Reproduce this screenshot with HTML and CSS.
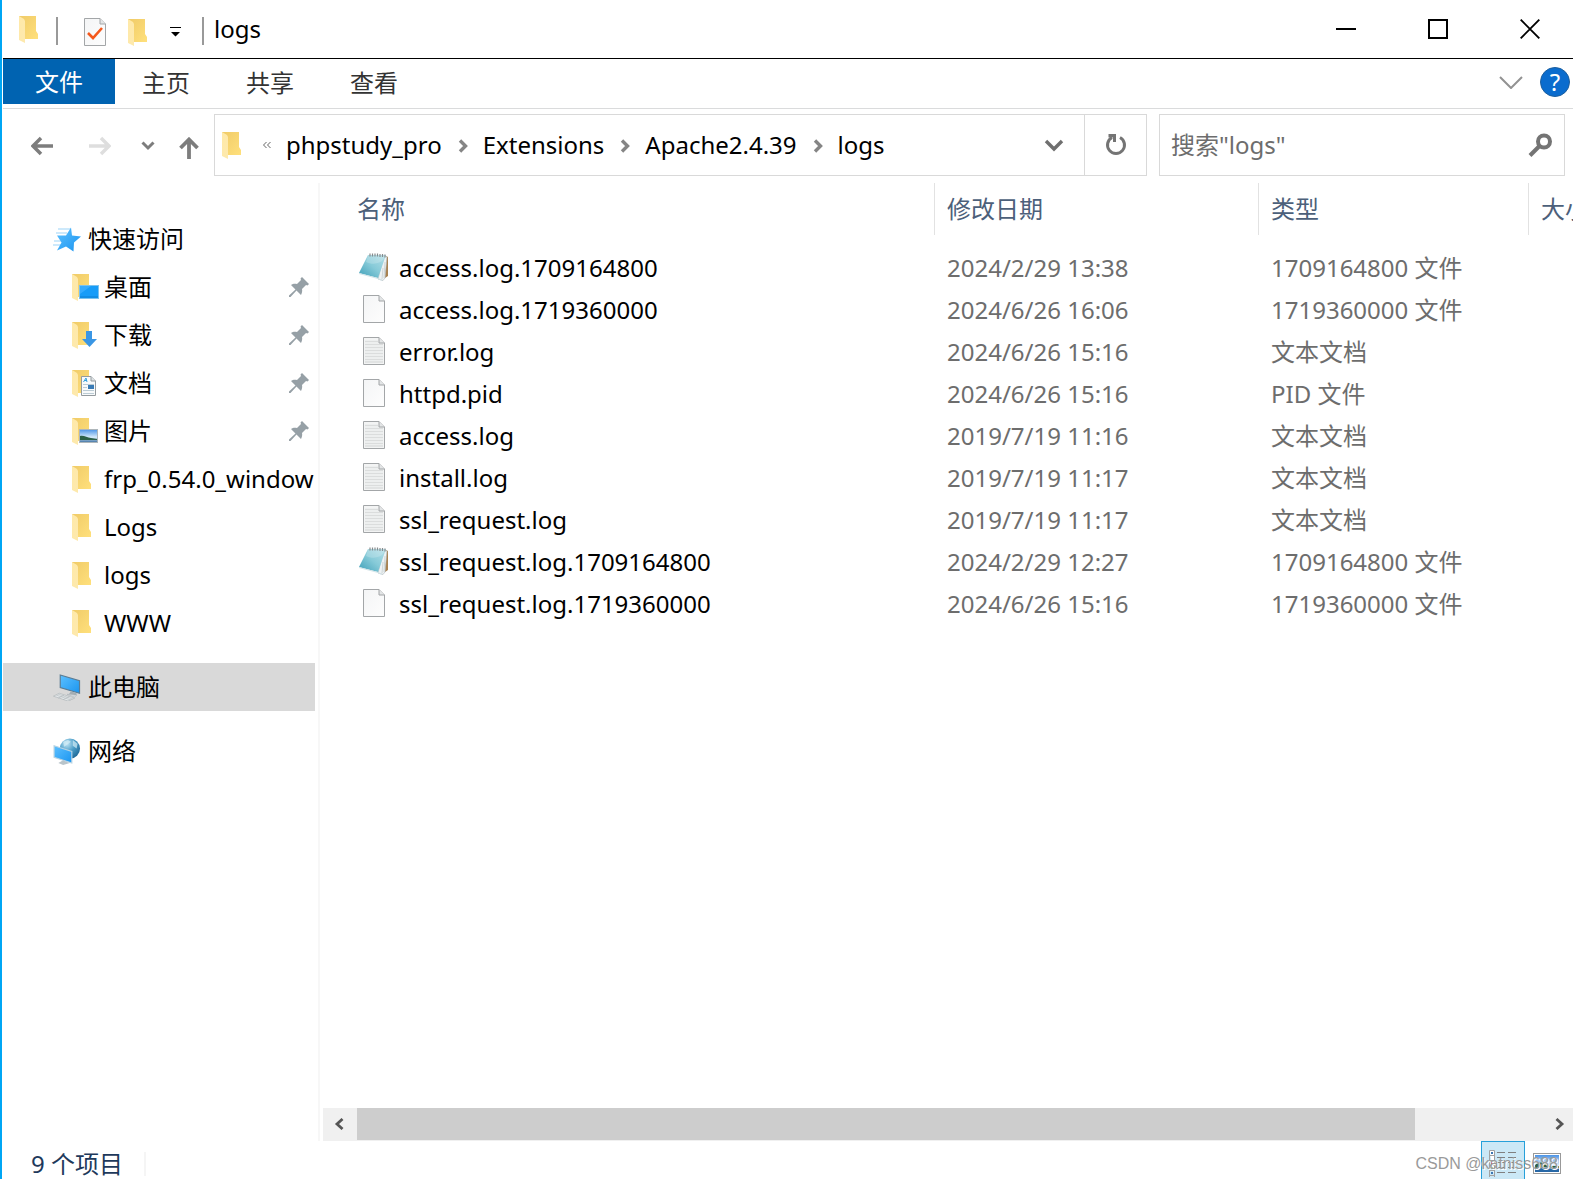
FILE: index.html
```html
<!DOCTYPE html>
<html lang="zh-CN">
<head>
<meta charset="utf-8">
<meta name="viewport" content="width=device-width, initial-scale=1">
<title>logs</title>
<link rel="stylesheet" href="styles.css">
</head>
<body>
<svg class="defs" aria-hidden="true">
  <defs>
    <linearGradient id="gFlap" x1="0" y1="0" x2="1" y2="1"><stop offset="0" stop-color="#ffe9a8"/><stop offset="1" stop-color="#fde9ae"/></linearGradient>
    <linearGradient id="gBack" x1="0" y1="0" x2="1" y2="1"><stop offset="0" stop-color="#f0cb68"/><stop offset="1" stop-color="#ffe07c"/></linearGradient>
    <linearGradient id="gBlue" x1="0" y1="0" x2="1" y2="1"><stop offset="0" stop-color="#5cc0ff"/><stop offset="1" stop-color="#1b95f0"/></linearGradient>
    <linearGradient id="gNote" x1="1" y1="0" x2="0" y2="1"><stop offset="0" stop-color="#b5e0e8"/><stop offset="0.5" stop-color="#86cad8"/><stop offset="1" stop-color="#3e9fb8"/></linearGradient>
    <linearGradient id="gPaper" x1="0" y1="0" x2="1" y2="1"><stop offset="0" stop-color="#f4f5f6"/><stop offset="1" stop-color="#fdfdfd"/></linearGradient>
    <linearGradient id="gSky" x1="0" y1="0" x2="0" y2="1"><stop offset="0" stop-color="#4b93e6"/><stop offset="0.6" stop-color="#d8ecfb"/><stop offset="1" stop-color="#3a6ea0"/></linearGradient>
    <radialGradient id="gGlobe" cx="0.35" cy="0.25" r="0.8"><stop offset="0" stop-color="#c3e6f5"/><stop offset="0.5" stop-color="#4c9ec8"/><stop offset="1" stop-color="#1e6796"/></radialGradient>
  </defs>
  <symbol id="folder" viewBox="0 0 19 27">
    <path d="M0 0H17V15L19 18V23H6L1 20Z" fill="url(#gBack)"/>
    <path d="M0 0L5 3L6 5V27L0 24Z" fill="url(#gFlap)"/>
  </symbol>
  <symbol id="page" viewBox="0 0 22 28">
    <path d="M.5 .5H16L21.500 6V27.500H.5Z" fill="url(#gPaper)" stroke="#a3a6a8"/>
    <path d="M16 .5V6H21.500" fill="#e3e5e6" stroke="#a3a6a8"/>
  </symbol>
  <symbol id="textpage" viewBox="0 0 22 28">
    <path d="M.5 .5H16L21.500 6V27.500H.5Z" fill="#f3f4f4" stroke="#a3a6a8"/>
    <path d="M2 4.500H15M2 7.500H20M2 10.500H20M2 13.500H20M2 16.500H20M2 19.500H20M2 22.500H20M2 25H20" stroke="#dbdddd" stroke-width="1.400"/>
    <path d="M16 .5V6H21.500" fill="#e3e5e6" stroke="#a3a6a8"/>
  </symbol>
  <symbol id="notepad" viewBox="0 0 30 28">
    <path d="M25 2L29 4L29 23L26 25Z" fill="#a98250"/>
    <path d="M25 2L28 4L26 25L24 27.500L19 26Z" fill="#eef2f3" stroke="#aab4b8" stroke-width=".6"/>
    <path d="M24 15L23 26M26 9L25 25" stroke="#c5ced1" stroke-width=".8"/>
    <path d="M9 2H27L19 25L0 20Z" fill="url(#gNote)"/>
    <path d="M0 20.500L19 25.500L23 27.500" stroke="#d3e4e8" fill="none"/>
    <path d="M7 9C13 12 18 11 23 8L27 2H9Z" fill="#fff" opacity=".2"/>
    <path d="M11 .5V3.500M13.500 .5V3.500M16 .5V3.500M18.500 .5V3.500M21 1V4M23.500 1V4M26 1.500V4.500" stroke="#858b8e" stroke-width="1.200"/>
  </symbol>
  <symbol id="pin" viewBox="0 0 20 20">
    <path d="M13 0L20 7L18.500 8.500L17 8L13 12C13.500 14 13 16 12 18L7.500 13.500L1.500 20H0V18.500L6.500 12.500L2 8C4 6.500 6 6.500 8 7L12 3L11.500 1.500Z" fill="#96a0a6"/>
  </symbol>
  <symbol id="crumb" viewBox="0 0 10 16">
    <path d="M2 2.500L7.500 8L2 13.500" fill="none" stroke="#858585" stroke-width="3.400"/>
  </symbol>
  <symbol id="desktop" viewBox="0 0 28 27">
    <use href="#folder" width="19" height="27"/>
    <rect x="7.500" y="11.500" width="19" height="13" fill="#179cf8" stroke="#7cc2ee"/>
    <path d="M8 23H26" stroke="#0f7fd0"/><path d="M8 20L19 12H8Z" fill="#35abff"/>
  </symbol>
  <symbol id="download" viewBox="0 0 28 27">
    <use href="#folder" width="19" height="27"/>
    <path d="M14 9H20V17H25L17.500 25L10 17H14Z" fill="#3a96e4"/>
  </symbol>
  <symbol id="document" viewBox="0 0 28 27">
    <use href="#folder" width="19" height="27"/>
    <path d="M9.500 6.500H19L23.500 11V25.500H9.500Z" fill="#f8fafb" stroke="#949b9f"/>
    <path d="M19 6.500V11H23.500" fill="#dfe3e5" stroke="#949b9f"/>
    <path d="M11.500 12L14 8L15 12M12.500 10.500H15" stroke="#35a0dd" fill="none"/>
    <path d="M11 14.500H22M11 17.500H15M11 20.500H22M11 23.500H22" stroke="#bcccd5"/>
    <rect x="16" y="15" width="6" height="4" fill="#397bb5"/>
  </symbol>
  <symbol id="picture" viewBox="0 0 28 27">
    <use href="#folder" width="19" height="27"/>
    <rect x="7.500" y="11.500" width="18" height="13" fill="url(#gSky)" stroke="#aeb6ba"/>
    <path d="M8 18C12 17 15 20 19 20L25 21V22H8Z" fill="#2d6148"/>
  </symbol>
  <symbol id="star" viewBox="0 0 28 24">
    <path d="M5 1.500H18M3 5.500H14M1 13.500H8M0 17.500H8" stroke="#9bd3f8" stroke-width="1.200"/>
    <path d="M18 0L19 8L28 9L21 15L20.500 24L13 19L4 23L8.500 15L4 8H13Z" fill="url(#gBlue)"/>
  </symbol>
  <symbol id="computer" viewBox="0 0 28 28">
    <path d="M7 1L27 7V20L7 14Z" fill="url(#gBlue)" stroke="#5a7c94" stroke-width="1.200"/>
    <path d="M18 18L24 20V22L16 21Z" fill="#a3adb3"/>
    <path d="M14 21L24 22L22 24Z" fill="#dce1e4" stroke="#a6aeb3" stroke-width=".5"/>
    <path d="M0 23L6 20L22 25L15 28Z" fill="#e6eaec" stroke="#adb4b8" stroke-width=".7"/>
    <path d="M3 22L18 27M5 21L20 26M5 25L11 22M10 26.500L16 23.500" stroke="#adb4b8" stroke-width=".6"/>
  </symbol>
  <symbol id="network" viewBox="0 0 28 28">
    <circle cx="17" cy="11" r="10.500" fill="url(#gGlobe)"/>
    <path d="M10 4L15 2L18 4L14 7L11 9ZM20 2L25 6L24 11L20 8Z" fill="#d4eef7" opacity=".7"/>
    <path d="M.6 8L19 14V26L.6 20Z" fill="url(#gBlue)" stroke="#b7d3e3" stroke-width="1.200"/>
    <path d="M10 23L14 25L17 26L10 28L5 26Z" fill="#b9c4ca"/>
  </symbol>
</svg>

<div class="window">
  <header class="titlebar">
    <svg class="folder" aria-hidden="true"><use href="#folder"/></svg>
    <span class="rule rule-first"></span>
    <button class="plain quick" aria-label="属性"><svg width="22" height="28" viewBox="0 0 22 28"><use href="#page" width="22" height="28"/><path d="M4 15L9 20L18 10" fill="none" stroke="#f4581c" stroke-width="2.600"/></svg></button>
    <button class="plain quick" aria-label="新建文件夹"><svg class="folder"><use href="#folder"/></svg></button>
    <button class="plain quick" aria-label="自定义快速访问工具栏"><svg width="12" height="10" viewBox="0 0 12 10"><path d="M1 0H12V1H1ZM2 5H11L6.500 9.500Z"/></svg></button>
    <span class="rule rule-last"></span>
    <h1 class="title">logs</h1>
    <div class="controls">
      <button class="plain control" aria-label="最小化"><svg width="20" height="20"><path d="M0 10H20" stroke="#000" stroke-width="2"/></svg></button>
      <button class="plain control" aria-label="最大化"><svg width="20" height="20"><rect x="1" y="1" width="18" height="18" fill="none" stroke="#000" stroke-width="2"/></svg></button>
      <button class="plain control" aria-label="关闭"><svg width="20" height="20"><path d="M.7 .7L19.300 19.300M19.300 .7L.7 19.300" stroke="#000" stroke-width="1.900"/></svg></button>
    </div>
  </header>

  <nav class="ribbon">
    <button class="plain tab tab-file">文件</button>
    <button class="plain tab">主页</button>
    <button class="plain tab">共享</button>
    <button class="plain tab">查看</button>
    <div class="ribbon-end">
      <button class="plain" aria-label="展开功能区"><svg width="24" height="14" viewBox="0 0 24 14"><path d="M1 2L12 13L23 2" fill="none" stroke="#929292" stroke-width="2"/></svg></button>
      <button class="plain help" aria-label="帮助">?</button>
    </div>
  </nav>

  <div class="toolbar">
    <div class="history">
      <button class="plain" aria-label="后退"><svg width="22" height="20" viewBox="0 0 22 20"><path d="M22 10H3M10 2L2 10L10 18" fill="none" stroke="#7d7d7d" stroke-width="3.500"/></svg></button>
      <button class="plain forward" aria-label="前进"><svg width="22" height="20" viewBox="0 0 22 20"><path d="M0 10H19M12 2L20 10L12 18" fill="none" stroke="#dedede" stroke-width="3.500"/></svg></button>
      <button class="plain recent" aria-label="最近浏览的位置"><svg width="14" height="10" viewBox="0 0 14 10"><path d="M1.500 1.500L7 7L12.500 1.500" fill="none" stroke="#7d7d7d" stroke-width="3"/></svg></button>
      <button class="plain up" aria-label="向上"><svg width="20" height="22" viewBox="0 0 20 22"><path d="M10 22V3M1.500 11L10 2.500L18.500 11" fill="none" stroke="#7d7d7d" stroke-width="3.800"/></svg></button>
    </div>
    <div class="address">
      <svg class="folder" aria-hidden="true"><use href="#folder"/></svg>
      <svg class="more" width="10" height="8" viewBox="0 0 10 8"><path d="M4.500 1L1.500 4L4.500 7M8.500 1L5.500 4L8.500 7" fill="none" stroke="#666"/></svg>
      <a class="crumb" href="#">phpstudy_pro</a>
      <svg class="arrow"><use href="#crumb"/></svg>
      <a class="crumb" href="#">Extensions</a>
      <svg class="arrow"><use href="#crumb"/></svg>
      <a class="crumb" href="#">Apache2.4.39</a>
      <svg class="arrow"><use href="#crumb"/></svg>
      <a class="crumb" href="#">logs</a>
      <button class="plain address-drop" aria-label="以前的位置"><svg width="20" height="14" viewBox="0 0 20 14"><path d="M2 3L10 11L18 3" fill="none" stroke="#6f6f6f" stroke-width="3.400"/></svg></button>
      <button class="plain refresh" aria-label="刷新"><svg width="22" height="22" viewBox="0 0 22 22"><path d="M15 3.500A8.500 8.500 0 1 1 7 3.500" fill="none" stroke="#747474" stroke-width="3"/><path d="M3.500 0H11V8H8V3.500H3.500Z" fill="#747474"/></svg></button>
    </div>
    <label class="search">
      <input class="search-input" type="text" placeholder="搜索&quot;logs&quot;" aria-label="搜索">
      <svg width="24" height="24" viewBox="0 0 24 24"><circle cx="16" cy="8.500" r="6" fill="none" stroke="#747474" stroke-width="4"/><path d="M11.500 13L2 22.500" stroke="#747474" stroke-width="4"/></svg>
    </label>
  </div>

  <main class="content">
    <nav class="sidebar">
      <ul class="tree">
        <li><a class="node root" href="#"><svg class="icon"><use href="#star"/></svg><span class="label">快速访问</span></a></li>
        <li><a class="node" href="#"><svg class="icon"><use href="#desktop"/></svg><span class="label">桌面</span><svg class="pin"><use href="#pin"/></svg></a></li>
        <li><a class="node" href="#"><svg class="icon"><use href="#download"/></svg><span class="label">下载</span><svg class="pin"><use href="#pin"/></svg></a></li>
        <li><a class="node" href="#"><svg class="icon"><use href="#document"/></svg><span class="label">文档</span><svg class="pin"><use href="#pin"/></svg></a></li>
        <li><a class="node" href="#"><svg class="icon"><use href="#picture"/></svg><span class="label">图片</span><svg class="pin"><use href="#pin"/></svg></a></li>
        <li><a class="node" href="#"><svg class="icon"><use href="#folder" width="19" height="27"/></svg><span class="label">frp_0.54.0_window</span></a></li>
        <li><a class="node" href="#"><svg class="icon"><use href="#folder" width="19" height="27"/></svg><span class="label">Logs</span></a></li>
        <li><a class="node" href="#"><svg class="icon"><use href="#folder" width="19" height="27"/></svg><span class="label">logs</span></a></li>
        <li><a class="node" href="#"><svg class="icon"><use href="#folder" width="19" height="27"/></svg><span class="label">WWW</span></a></li>
      </ul>
      <a class="node root selected" href="#"><svg class="icon"><use href="#computer"/></svg><span class="label">此电脑</span></a>
      <a class="node root" href="#"><svg class="icon"><use href="#network"/></svg><span class="label">网络</span></a>
    </nav>

    <section class="pane">
      <table class="files">
        <colgroup><col class="col-name"><col class="col-date"><col class="col-type"><col></colgroup>
        <thead>
          <tr><th>名称</th><th>修改日期</th><th>类型</th><th>大小</th></tr>
        </thead>
        <tbody>
          <tr><td><div class="file"><svg class="glyph"><use href="#notepad"/></svg>access.log.1709164800</div></td><td>2024/2/29 13:38</td><td>1709164800 文件</td><td></td></tr>
          <tr><td><div class="file"><svg class="glyph"><use href="#page"/></svg>access.log.1719360000</div></td><td>2024/6/26 16:06</td><td>1719360000 文件</td><td></td></tr>
          <tr><td><div class="file"><svg class="glyph"><use href="#textpage"/></svg>error.log</div></td><td>2024/6/26 15:16</td><td>文本文档</td><td></td></tr>
          <tr><td><div class="file"><svg class="glyph"><use href="#page"/></svg>httpd.pid</div></td><td>2024/6/26 15:16</td><td>PID 文件</td><td></td></tr>
          <tr><td><div class="file"><svg class="glyph"><use href="#textpage"/></svg>access.log</div></td><td>2019/7/19 11:16</td><td>文本文档</td><td></td></tr>
          <tr><td><div class="file"><svg class="glyph"><use href="#textpage"/></svg>install.log</div></td><td>2019/7/19 11:17</td><td>文本文档</td><td></td></tr>
          <tr><td><div class="file"><svg class="glyph"><use href="#textpage"/></svg>ssl_request.log</div></td><td>2019/7/19 11:17</td><td>文本文档</td><td></td></tr>
          <tr><td><div class="file"><svg class="glyph"><use href="#notepad"/></svg>ssl_request.log.1709164800</div></td><td>2024/2/29 12:27</td><td>1709164800 文件</td><td></td></tr>
          <tr><td><div class="file"><svg class="glyph"><use href="#page"/></svg>ssl_request.log.1719360000</div></td><td>2024/6/26 15:16</td><td>1719360000 文件</td><td></td></tr>
        </tbody>
      </table>
      <div class="scrollbar">
        <button class="plain scroll-button" aria-label="向左滚动"><svg width="12" height="12" viewBox="0 0 12 12"><path d="M8.500 1L3 6L8.500 11" fill="none" stroke="#555" stroke-width="2.800"/></svg></button>
        <div class="track"><div class="thumb"></div></div>
        <button class="plain scroll-button" aria-label="向右滚动"><svg width="10" height="12" viewBox="0 0 10 12"><path d="M1.500 1L7 6L1.500 11" fill="none" stroke="#555" stroke-width="2.800"/></svg></button>
      </div>
    </section>
  </main>

  <footer class="status">
    <span class="count">9 个项目</span>
    <div class="views">
      <button class="plain view view-active" aria-label="详细信息"><svg width="28" height="27" viewBox="0 0 28 27"><path d="M.5 .5H5.500V27M.5 .5V27M.5 5.500H5.500M.5 10.500H5.500M.5 15.500H5.500M.5 20.500H5.500M.5 25.500H5.500" fill="#fff" stroke="#a2a2a2"/><path d="M2 2H4V4H2ZM2 22H4V24H2Z" fill="#3b78b4"/><path d="M2 12H4V14H2Z" fill="#d3442e"/><path d="M2 17H4V19H2Z" fill="#6b9d45"/><path d="M8 2.500H16M19 2.500H27M8 7.500H16M19 7.500H27M8 12.500H16M19 12.500H27M8 17.500H16M19 17.500H27M8 22.500H16M19 22.500H27" stroke="#808080"/></svg></button>
      <button class="plain view" aria-label="大缩略图"><svg width="28" height="21" viewBox="0 0 28 21"><rect x=".5" y=".5" width="27" height="20" fill="#fff" stroke="#999"/><rect x="2" y="2" width="24" height="17" fill="url(#gSky)"/><path d="M2 12C6 8 11 9 14 13H26V15L10 14L2 16Z" fill="#2c6047"/><path d="M2 15L26 16V19H2Z" fill="#2868a6"/></svg></button>
    </div>
    <span class="watermark">CSDN @katniss688</span>
  </footer>
</div>
</body>
</html>
```
FILE: styles.css
```css
* {
  box-sizing: border-box;
}

body {
  margin: 0;
  background: #fff;
  color: #000;
  font-family: "Noto Sans", "Noto Sans CJK SC", sans-serif;
  font-size: 24px;
  line-height: 32px;
}

.defs {
  position: absolute;
  width: 0;
  height: 0;
}

svg {
  display: block;
  flex: none;
}

a {
  color: inherit;
  text-decoration: none;
}

.plain {
  display: flex;
  align-items: center;
  justify-content: center;
  padding: 0;
  border: 0;
  background: none;
  color: inherit;
  font: inherit;
}

.folder {
  width: 19px;
  height: 27px;
}

.window {
  display: flex;
  flex-direction: column;
  height: 100vh;
  min-height: 860px;
  padding-left: 1px;
  border-left: 2px solid #00a6f4;
  overflow: hidden;
}

/* Title bar */

.titlebar {
  display: flex;
  align-items: center;
  height: 59px;
  padding-left: 16px;
  border-bottom: 1px solid #000;
}

.rule {
  width: 2px;
  height: 28px;
  background: #999;
}

.rule-first {
  margin: 4px 26px 0 18px;
}

.rule-last {
  margin: 4px 10px 0 0;
}

.quick {
  margin: 6px 22px 0 0;
}

.quick:nth-of-type(3) {
  margin-right: 21px;
}

.title {
  margin: 0;
  font-size: 24px;
  font-weight: 400;
}

.controls {
  display: flex;
  align-self: stretch;
  gap: 6px;
  margin-left: auto;
}

.control {
  width: 86px;
}

/* Ribbon */

.ribbon {
  display: flex;
  height: 50px;
  border-bottom: 1px solid #dadbdc;
  color: #333;
}

.tab {
  width: 104px;
  height: 48px;
  padding-right: 2px;
}

.tab-file {
  width: 112px;
  height: 45px;
  padding-right: 0;
  background: #0063b1;
  color: #fff;
}

.ribbon-end {
  display: flex;
  align-items: center;
  gap: 17px;
  margin-left: auto;
  padding: 0 3px 3px 0;
}

.help {
  width: 30px;
  height: 30px;
  border: 1px solid #1d5f9e;
  border-radius: 50%;
  background: #0a6cce;
  color: #fff;
}

/* Navigation buttons, address and search */

.toolbar {
  display: flex;
  padding: 5px 8px 7px 0;
}

.history {
  display: flex;
  width: 211px;
  padding: 1px 0 0 28px;
}

.forward {
  margin-left: 36px;
}

.recent {
  margin-left: 30px;
}

.up {
  margin-left: 24px;
  padding-top: 4px;
}

.address {
  display: flex;
  flex: 1;
  align-items: center;
  height: 62px;
  min-width: 0;
  padding-left: 7px;
  border: 1px solid #d9d9d9;
}

.more {
  margin: 0 14px 0 21px;
}

.arrow {
  width: 10px;
  height: 16px;
  margin: 2px 15px 0 16px;
}

.address-drop {
  width: 60px;
  height: 60px;
  margin-left: auto;
}

.refresh {
  width: 62px;
  height: 60px;
  border-left: 1px solid #d9d9d9;
}

.search {
  display: flex;
  align-items: center;
  width: 406px;
  margin-left: 12px;
  padding: 0 12px 0 11px;
  border: 1px solid #d9d9d9;
}

.search-input {
  flex: 1;
  min-width: 0;
  padding: 0;
  border: 0;
  outline: 0;
  background: none;
  font: inherit;
}

.search-input::placeholder {
  color: #6d6d6d;
  opacity: 1;
}

/* Folder tree */

.content {
  display: flex;
  flex: 1;
  min-height: 0;
}

.sidebar {
  width: 317px;
  padding: 32px 3px 0 0;
  border-right: 2px solid #f7f7f7;
}

.tree {
  margin: 0 0 16px;
  padding: 0;
  list-style: none;
}

.node {
  display: flex;
  align-items: center;
  gap: 4px;
  height: 48px;
  padding: 0 6px 0 69px;
}

.node + .node {
  margin-top: 16px;
}

.root {
  padding-left: 50px;
  gap: 7px;
}

.selected {
  background: #d9d9d9;
}

.icon {
  width: 28px;
  height: 27px;
}

.label {
  flex: 1;
  white-space: nowrap;
}

.pin {
  width: 20px;
  height: 20px;
}

/* File list */

.pane {
  display: flex;
  flex: 1;
  flex-direction: column;
  min-width: 0;
}

.files {
  width: 100%;
  border-spacing: 0;
  table-layout: fixed;
  color: #6d6d6d;
}

.col-name {
  width: 615px;
}

.col-date {
  width: 324px;
}

.col-type {
  width: 270px;
}

th,
td {
  height: 42px;
  padding: 0 0 0 12px;
  overflow: hidden;
  text-align: left;
  white-space: nowrap;
}

th {
  height: 52px;
  border-right: 1px solid #e2e2e2;
  color: #4c607a;
  font-weight: 400;
}

th:first-child,
td:first-child {
  padding-left: 37px;
}

td:first-child {
  padding-left: 39px;
}

th:last-child {
  border-right: 0;
}

thead::after {
  content: "";
  display: block;
  height: 12px;
}

.file {
  display: flex;
  align-items: center;
  gap: 10px;
  color: #000;
}

.glyph {
  width: 30px;
  height: 28px;
  margin-bottom: 2px;
}

.scrollbar {
  display: flex;
  height: 33px;
  margin: auto 0 0 3px;
  border-bottom: 1px solid #f0f0f0;
  background: #f0f0f0;
}

.scroll-button {
  width: 34px;
}

.scroll-button:last-child {
  padding-left: 8px;
}

.track {
  flex: 1;
}

.thumb {
  width: calc(100% - 124px);
  height: 32px;
  background: #cdcdcd;
}

/* Status bar */

.status {
  position: relative;
  display: flex;
  height: 38px;
  color: #1e395b;
}

.count {
  height: 24px;
  margin-top: 11px;
  padding: 0 21px 0 28px;
  border-right: 2px solid #f5f5f5;
  line-height: 24px;
}

.views {
  display: flex;
  margin-left: auto;
  padding-right: 4px;
}

.view {
  width: 44px;
  height: 44px;
}

.view-active {
  border: 1px solid #26a0da;
  background: #cbe8f6;
}

.watermark {
  position: absolute;
  right: 15px;
  bottom: 3px;
  color: #9a9a9a;
  font-family: "Liberation Sans", sans-serif;
  font-size: 16px;
  line-height: 24px;
  text-shadow: 1px 1px 0 #fff;
}
```
